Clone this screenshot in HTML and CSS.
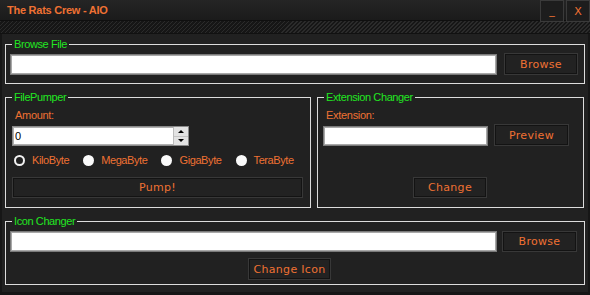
FILE: index.html
```html
<!DOCTYPE html>
<html>
<head>
<meta charset="utf-8">
<title>The Rats Crew - AIO</title>
<link rel="stylesheet" href="styles.css">
</head>
<body>
<div class="window">
  <div class="titlebar">
    <div class="title">The Rats Crew - AIO</div>
    <div class="winbtns">
      <div class="winbtn min">_</div>
      <div class="winbtn close">X</div>
    </div>
  </div>
  <div class="hatch"></div>
  <div class="main">
    <fieldset class="group g-browse">
      <legend>Browse File</legend>
      <div class="body b-browse">
        <div class="row r-browse">
          <input class="field f-browse" type="text">
          <button class="btn btn-browse">Browse</button>
        </div>
      </div>
    </fieldset>

    <div class="pair">
      <fieldset class="group g-pump">
        <legend>FilePumper</legend>
        <div class="body b-pump">
          <div class="lbl">Amount:</div>
          <div class="numbox">
            <input class="numfield" type="text" value="0">
            <div class="spin">
              <div class="arr"><span class="tri up"></span></div>
              <div class="arr"><span class="tri down"></span></div>
            </div>
          </div>
          <div class="radios">
            <div class="radio"><span class="dot on"></span><span class="rtxt">KiloByte</span></div>
            <div class="radio"><span class="dot"></span><span class="rtxt">MegaByte</span></div>
            <div class="radio"><span class="dot"></span><span class="rtxt">GigaByte</span></div>
            <div class="radio"><span class="dot"></span><span class="rtxt">TeraByte</span></div>
          </div>
          <button class="btn btn-pump">Pump!</button>
        </div>
      </fieldset>

      <fieldset class="group g-ext">
        <legend>Extension Changer</legend>
        <div class="body b-ext">
          <div class="lbl">Extension:</div>
          <div class="row r-ext">
            <input class="field f-ext" type="text">
            <button class="btn btn-preview">Preview</button>
          </div>
          <button class="btn btn-change">Change</button>
        </div>
      </fieldset>
    </div>

    <fieldset class="group g-icon">
      <legend>Icon Changer</legend>
      <div class="body b-icon">
        <div class="row r-icon">
          <input class="field f-icon" type="text">
          <button class="btn btn-browse2">Browse</button>
        </div>
        <button class="btn btn-icon">Change Icon</button>
      </div>
    </fieldset>
  </div>
</div>
</body>
</html>
```

FILE: styles.css
```css
* { box-sizing: border-box; }

html, body {
  margin: 0;
  padding: 0;
}

body {
  width: 590px;
  height: 295px;
  overflow: hidden;
  background: #161616;
  font-family: "Liberation Sans", Arial, sans-serif;
  font-size: 11px;
}

.window {
  display: flex;
  flex-direction: column;
  height: 295px;
}

/* ---------- title bar ---------- */
.titlebar {
  height: 21px;
  display: flex;
  justify-content: space-between;
  align-items: flex-start;
  background: linear-gradient(#252525, #1b1b1b);
  border-bottom: 1px solid #0f0f0f;
}

.title {
  padding-left: 7px;
  line-height: 20px;
  font-weight: bold;
  font-size: 11px;
  letter-spacing: -0.25px;
  color: #ef7133;
}

.winbtns {
  display: flex;
  gap: 2px;
}

.winbtn {
  width: 24px;
  height: 22px;
  border: 1px solid #3a3a3a;
  background: #1d1d1d;
  color: #ef7133;
  font-family: "DejaVu Sans", sans-serif;
  font-size: 11px;
  display: flex;
  justify-content: center;
  align-items: center;
  position: relative;
  z-index: 1;
}

.winbtn.min {
  align-items: flex-end;
  padding-bottom: 4px;
}

.hatch {
  height: 13px;
  border-bottom: 1px solid #111;
  background: repeating-linear-gradient(135deg, #2b2b2b 0 1.3px, #161616 1.3px 2.83px);
}

/* ---------- main panel ---------- */
.main {
  flex: 1;
  margin: 0 2px 3px;
  padding: 4px 3px 0;
  background: #212121;
  display: flex;
  flex-direction: column;
}

.group {
  margin: 0;
  padding: 0;
  min-width: 0;
  border: 1px solid #dcdcdc;
}

.group legend {
  margin-left: 6px;
  padding: 0 2px;
  color: #22e622;
  font-size: 11px;
  line-height: 13px;
  letter-spacing: -0.4px;
}

.body {
  display: flex;
  flex-direction: column;
}

.row {
  display: flex;
}

.lbl {
  margin-left: 3px;
  line-height: 13px;
  color: #ef7133;
  letter-spacing: -0.3px;
}

.field {
  -webkit-appearance: none;
  appearance: none;
  margin: 0;
  padding: 0 2px;
  background: #fff;
  border: 1px solid #7a7a7a;
  box-shadow: inset 0 0 0 1px #a8a8a8;
  font: inherit;
  outline: none;
}

.btn {
  -webkit-appearance: none;
  appearance: none;
  margin: 0;
  padding: 0;
  background: #222;
  border: 1px solid #383838;
  box-shadow: inset 0 0 0 1px #131313;
  color: #ef7133;
  font-family: "DejaVu Sans", sans-serif;
  font-size: 11px;
  letter-spacing: 0.3px;
  display: flex;
  justify-content: center;
  align-items: center;
}

/* ---------- Browse File ---------- */
.b-browse {
  padding: 2px 6px 8px 4px;
}

.r-browse {
  align-items: center;
  gap: 7px;
}

.f-browse {
  width: 487px;
  height: 21px;
}

.btn-browse {
  width: 74px;
  height: 22px;
}

/* ---------- pair ---------- */
.pair {
  display: flex;
  gap: 6px;
  margin-top: 7px;
}

.g-pump { width: 306px; }
.g-ext { width: 267px; }

.b-pump {
  padding: 5px 7px 9px 6px;
}

.numbox {
  margin-top: 4px;
  width: 177px;
  height: 20px;
  display: flex;
  background: #fff;
  border: 1px solid #8a8a8a;
  box-shadow: inset 0 0 0 1px #b0b0b0;
}

.numfield {
  flex: 1;
  min-width: 0;
  margin: 0;
  padding: 0 2px 0 2px;
  border: none;
  background: transparent;
  font: inherit;
  color: #000;
  outline: none;
}

.spin {
  width: 15px;
  display: flex;
  flex-direction: column;
  gap: 1px;
  background: #c4c4c4;
  border-left: 1px solid #bdbdbd;
}

.arr {
  flex: 1;
  background: #e3e3e3;
  display: flex;
  justify-content: center;
  align-items: center;
}

.tri {
  width: 0;
  height: 0;
  border-left: 3px solid transparent;
  border-right: 3px solid transparent;
}

.tri.up { border-bottom: 3px solid #000; }
.tri.down { border-top: 3px solid #000; }

.radios {
  margin-top: 9px;
  margin-left: 2px;
  height: 11px;
  display: flex;
  align-items: center;
  gap: 14px;
}

.radio {
  display: flex;
  align-items: center;
  gap: 7px;
}

.dot {
  width: 11px;
  height: 11px;
  border-radius: 50%;
  background: #fafafa;
  flex: none;
}

.dot.on {
  background: #222;
  border: 2px solid #f2f2f2;
}

.rtxt {
  color: #ef7133;
  letter-spacing: -0.4px;
  line-height: 13px;
}

.btn-pump {
  margin-top: 11px;
  width: 291px;
  height: 21px;
}

.b-ext {
  padding: 5px 0 9px 5px;
}

.r-ext {
  margin-top: 2px;
  align-items: flex-end;
  gap: 6px;
}

.f-ext {
  width: 165px;
  height: 20px;
}

.btn-preview {
  width: 75px;
  height: 22px;
}

.btn-change {
  margin-top: 31px;
  margin-left: 90px;
  width: 74px;
  height: 21px;
}

/* ---------- Icon Changer ---------- */
.g-icon {
  margin-top: 7px;
}

.b-icon {
  padding: 3px 7px 4px 4px;
}

.r-icon {
  gap: 5px;
}

.f-icon {
  width: 487px;
  height: 21px;
}

.btn-browse2 {
  width: 75px;
  height: 21px;
}

.btn-icon {
  margin-top: 6px;
  margin-left: 238px;
  width: 83px;
  height: 22px;
}
```
